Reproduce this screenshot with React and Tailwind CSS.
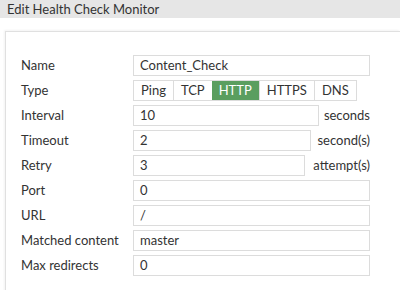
import React from 'react';

const TYPES = ['Ping', 'TCP', 'HTTP', 'HTTPS', 'DNS'];

function Row({ label, children }) {
  return (
    <div className="flex items-center h-[21px]">
      <div className="w-[112px] shrink-0 text-[13px] text-[#333]">{label}</div>
      {children}
    </div>
  );
}

function TextInput({ value, width = 'w-[237px]' }) {
  return (
    <div className={`${width} h-[21px] border border-[#dcdcdc] bg-white px-[6px] flex items-center text-[13px] text-[#333]`}>
      {value}
    </div>
  );
}

function WithUnit({ value, width, unit }) {
  return (
    <div className="flex items-center w-[237px]">
      <TextInput value={value} width={width} />
      <span className="ml-auto text-[13px] text-[#333]">{unit}</span>
    </div>
  );
}

export default function App() {
  return (
    <div className="w-[400px] h-[290px] overflow-hidden bg-white" style={{ fontFamily: 'Lato, "Open Sans", sans-serif' }}>
      <div className="h-[18px] bg-[#e6e6e6] pl-[7px] text-[13px] leading-[18px] text-[#333]">
        Edit Health Check Monitor
      </div>
      <div className="mt-[13px] ml-[5px] border-l border-t border-[#e0e0e0] shadow-[-1px_-1px_2px_rgba(0,0,0,0.05)] pl-[15px] pt-[23px] pb-[20px] flex flex-col gap-[4px]">
        <Row label="Name"><TextInput value="Content_Check" /></Row>
        <Row label="Type">
          <div className="flex h-[21px] border border-[#dcdcdc]">
            {TYPES.map((t, i) => (
              <div
                key={t}
                className={
                  t === 'HTTP'
                    ? 'px-[7px] flex items-center text-[13px] bg-[#5a9e5f] text-white'
                    : `px-[7px] flex items-center text-[13px] text-[#333] ${i > 0 ? 'border-l border-[#dcdcdc]' : ''}`
                }
              >
                {t}
              </div>
            ))}
          </div>
        </Row>
        <Row label="Interval"><WithUnit value="10" width="w-[186px]" unit="seconds" /></Row>
        <Row label="Timeout"><WithUnit value="2" width="w-[178px]" unit="second(s)" /></Row>
        <Row label="Retry"><WithUnit value="3" width="w-[172px]" unit="attempt(s)" /></Row>
        <Row label="Port"><TextInput value="0" /></Row>
        <Row label="URL"><TextInput value="/" /></Row>
        <Row label="Matched content"><TextInput value="master" /></Row>
        <Row label="Max redirects"><TextInput value="0" /></Row>
      </div>
    </div>
  );
}
